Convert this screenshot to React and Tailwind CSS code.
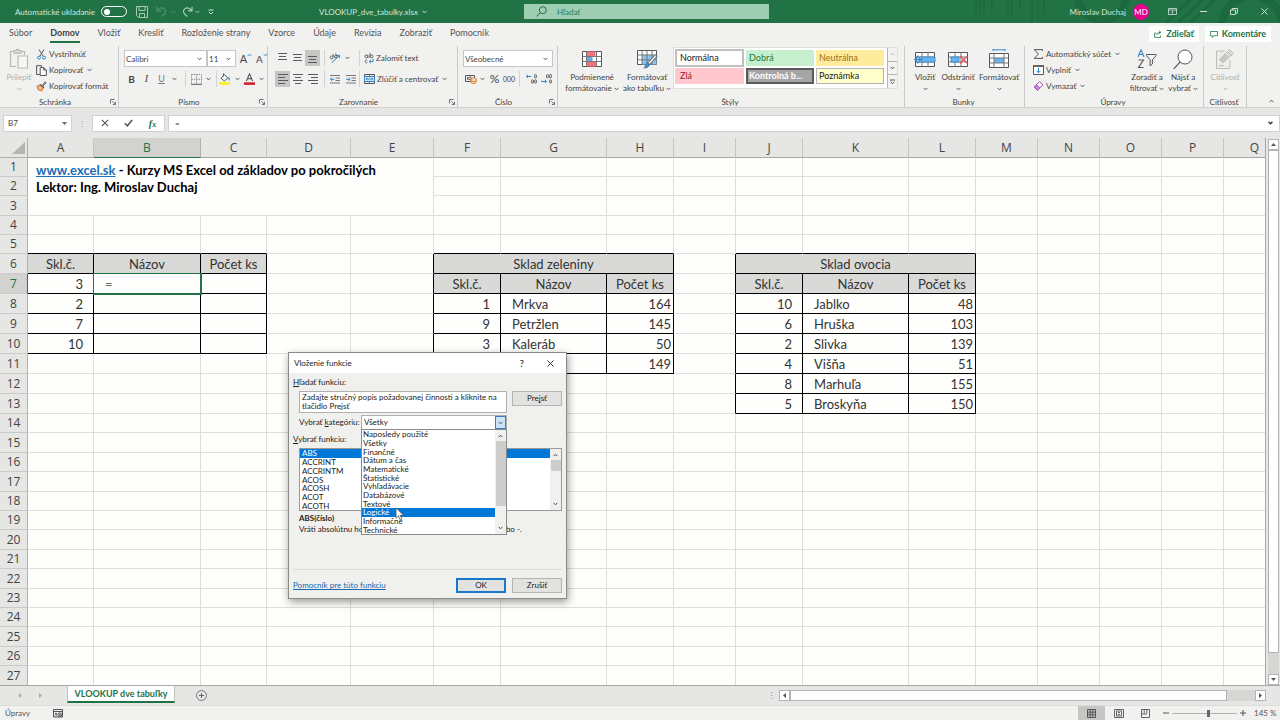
import React, { useState } from 'react';

const columns = [
  ['A', 66], ['B', 107], ['C', 66], ['D', 84], ['E', 83], ['F', 67], ['G', 106], ['H', 67], ['I', 62],
  ['J', 67], ['K', 106], ['L', 67], ['M', 62], ['N', 62], ['O', 62], ['P', 62], ['Q', 62],
];

const rowHeights = [
  19, 19, 20, 19, 19, 20, 20, 20, 20, 20, 20, 20, 20, 19, 20, 19, 20, 19, 19, 20, 19, 20, 19, 19, 20, 19, 20,
];

const cells = {
  A6: 'Skl.č.', B6: 'Názov', C6: 'Počet ks',
  A7: 3, B7: '=', A8: 2, A9: 7, A10: 10,
  F6: 'Sklad zeleniny', F7: 'Skl.č.', G7: 'Názov', H7: 'Počet ks',
  F8: 1, G8: 'Mrkva', H8: 164,
  F9: 9, G9: 'Petržlen', H9: 145,
  F10: 3, G10: 'Kaleráb', H10: 50,
  H11: 149,
  J6: 'Sklad ovocia', J7: 'Skl.č.', K7: 'Názov', L7: 'Počet ks',
  J8: 10, K8: 'Jablko', L8: 48,
  J9: 6, K9: 'Hruška', L9: 103,
  J10: 2, K10: 'Slivka', L10: 139,
  J11: 4, K11: 'Višňa', L11: 51,
  J12: 8, K12: 'Marhuľa', L12: 155,
  J13: 5, K13: 'Broskyňa', L13: 150,
};

// bordered blocks: first/last column, first/last row, number of shaded rows
const blocks = [
  { from: 'A', to: 'C', top: 6, bottom: 10, head: 1 },
  { from: 'F', to: 'H', top: 6, bottom: 11, head: 2 },
  { from: 'J', to: 'L', top: 6, bottom: 13, head: 2 },
];

const tabs = ['Súbor', 'Domov', 'Vložiť', 'Kresliť', 'Rozloženie strany', 'Vzorce', 'Údaje', 'Revízia', 'Zobraziť', 'Pomocník'];

const categories = [
  'Naposledy použité', 'Všetky', 'Finančné', 'Dátum a čas', 'Matematické', 'Štatistické',
  'Vyhľadávacie', 'Databázové', 'Textové', 'Logické', 'Informačné', 'Technické',
];

const functions = ['ABS', 'ACCRINT', 'ACCRINTM', 'ACOS', 'ACOSH', 'ACOT', 'ACOTH'];

/* ---------- icons ---------- */

const Svg = ({ w, h, className = '', children }) => (
  <svg width={w} height={h} viewBox={`0 0 ${w} ${h}`} fill="none" stroke="#555" className={`shrink-0 ${className}`} aria-hidden="true">
    {children}
  </svg>
);

const Chevron = ({ className = 'stroke-[#555]' }) => (
  <svg width="5" height="4" viewBox="0 0 5 4" fill="none" className={`shrink-0 ${className}`} aria-hidden="true">
    <path d="M.6.9 2.5 2.8 4.4.9" />
  </svg>
);

const Launcher = () => (
  <Svg w={6} h={6}>
    <path d="M.5 4.5v-4h4M2.3 2.3l3 3M5.5 2.8v2.7H2.8" strokeWidth=".8" />
  </Svg>
);

const PasteIcon = () => (
  <Svg w={20} h={22}>
    <g stroke="#b9b9b7" strokeWidth="1.2">
      <path d="M7 18.5H1.5v-15H5M12 3.5h3.5V7" />
      <path d="M5 2.5h2a1.6 1.6 0 0 1 3 0h2v2.6H5z" fill="#dcdcda" />
      <path d="M9 8h9.5v12H9z" fill="#f6f6f4" />
    </g>
  </Svg>
);

const ScissorsIcon = () => (
  <Svg w={11} h={11}>
    <path d="M3 .5 7 7M8 .5 4 7" />
    <circle cx="3" cy="8.6" r="1.5" stroke="#2e86c8" />
    <circle cx="8" cy="8.6" r="1.5" stroke="#2e86c8" />
  </Svg>
);

const CopyIcon = () => (
  <Svg w={11} h={11}>
    <path d="M4 9.5H.6V.6h4.8V2" />
    <path d="M4.2 2.6h3.6L10.3 5v5.5H4.2z" fill="#fff" />
    <path d="M7.6 2.6V5h2.7" />
  </Svg>
);

const BrushIcon = () => (
  <Svg w={11} h={11}>
    <path d="M6.5 4.2 9.2.8l1 1-3.2 3" />
    <path d="M1 5.2 4.6 3.6 7.6 6.4 5.8 10 2 8.6z" fill="#f4b183" stroke="#d9762b" />
    <path d="M4.2 3.4 8 6.8" strokeWidth="1.4" />
  </Svg>
);

const AlignIcon = ({ lines }) => (
  <Svg w={10} h={10}>
    {lines.map(([x1, x2, y]) => (
      <path key={y} d={`M${x1} ${y}H${x2}`} stroke="#5a5a5a" />
    ))}
  </Svg>
);

const IndentIcon = ({ right }) => (
  <Svg w={11} h={9}>
    <path d="M0 .5h10M5.5 3h4.5M5.5 5.5h4.5M0 8h10" stroke="#6a6a6a" strokeWidth=".9" />
    <path d={right ? 'M0 4.3h4M2.4 2.6 4.2 4.3 2.4 6' : 'M.4 4.3h4M2.2 2.6.4 4.3 2.2 6'} stroke="#2e86c8" />
  </Svg>
);

const OrientationIcon = () => (
  <Svg w={12} h={12}>
    <circle cx="2.8" cy="5.4" r="1.5" strokeWidth=".9" />
    <path d="M3.6 2.2 6.2 5.6M6.2 1.2 8.4 4" strokeWidth=".9" />
    <circle cx="6.8" cy="4.6" r="1.2" strokeWidth=".9" />
    <path d="M2.6 10.8 10.6 3.4M7.8 3.4h2.8v2.8" stroke="#2e86c8" />
  </Svg>
);

const WrapIcon = () => (
  <Svg w={10} h={11}>
    <circle cx="2.3" cy="3.4" r="1.4" strokeWidth=".9" />
    <path d="M3.9 1.8v3.2M6 0v5" strokeWidth=".9" />
    <circle cx="7.6" cy="3.4" r="1.4" strokeWidth=".9" />
    <path d="M3.4 7.3a1.4 1.4 0 1 0 0 2.2" strokeWidth=".9" />
    <path d="M9 6v2.6H5.4M6.8 7 5.2 8.6l1.6 1.6" stroke="#2e86c8" />
  </Svg>
);

const MergeIcon = () => (
  <Svg w={11} h={10}>
    <path d="M.5.5h10v9H.5z" />
    <path d="M.5 2.5h10v5H.5z" fill="#d3e8f8" stroke="#2e86c8" />
    <path d="M5.5.5v2M5.5 7.5v2M2 5h7M3.4 3.8 2.2 5l1.2 1.2M7.6 3.8 8.8 5 7.6 6.2" stroke="#2b6fa8" strokeWidth=".8" />
  </Svg>
);

const BordersIcon = () => (
  <Svg w={11} h={11}>
    <path d="M.5.5h10v9.5M.5.5v9.5M5.5.5v9.5M.5 5.3h10" strokeDasharray="1.4 1" stroke="#888" />
    <path d="M0 10.3h11" />
  </Svg>
);

const FillIcon = () => (
  <Svg w={12} h={12}>
    <path d="M2 5.2 5.4 1.6 8.8 5 5.4 8z" fill="#fff" />
    <path d="M4.6.4v3.2" />
    <path d="M9.4 4.4q1.6 1.8.6 3" stroke="#2e86c8" strokeWidth="1.3" />
    <path d="M0 10.5h11" stroke="#fbf12a" strokeWidth="3" />
  </Svg>
);

const FontColorIcon = () => (
  <Svg w={11} h={12}>
    <path d="M2.4 8 5.5.8 8.6 8M3.4 5.6h4.2" strokeWidth="1.1" />
    <path d="M0 10.6h11" stroke="#d3222a" strokeWidth="2.6" />
  </Svg>
);

const CurrencyIcon = () => (
  <Svg w={12} h={10}>
    <path d="M.5 1.5h9v6h-9zM2.6 3.2v2.6" />
    <circle cx="5" cy="4.4" r="1.4" />
    <ellipse cx="8.6" cy="5" rx="2.6" ry="1.2" fill="#f8d7b4" stroke="#d9762b" strokeWidth=".9" />
    <path d="M6 5v3.4c0 1.4 5.2 1.4 5.2 0V5" fill="#f8d7b4" stroke="#d9762b" strokeWidth=".9" />
    <path d="M6 6.8c.6 1 4.6 1 5.2 0" stroke="#d9762b" strokeWidth=".8" />
  </Svg>
);

const DecimalIcon = ({ add }) => (
  <Svg w={11} h={10}>
    <g strokeWidth=".9">
      {!add && <rect x="5.6" y=".5" width="1.8" height="3.4" rx=".9" />}
      <rect x="8.6" y=".5" width="1.8" height="3.4" rx=".9" />
      {add && <rect x="5.6" y="5.8" width="1.8" height="3.4" rx=".9" />}
      <rect x="8.6" y="5.8" width="1.8" height="3.4" rx=".9" />
    </g>
    <path d={add ? 'M.4 2.4h5M2 .8.4 2.4 2 4' : 'M0 7.4h5.5M3.900 5.800l1.600 1.600L3.900 9'} stroke="#2e86c8" />
  </Svg>
);

const CondFormatIcon = () => (
  <Svg w={20} h={17}>
    <path d="M.5.5h19v15H.5z" fill="#fff" />
    <path d="M4.5.5h9v5h-9zM4.5 10.5h10v5h-10z" fill="#f4737c" stroke="none" />
    <path d="M4.5 5.5h6v5h-6z" fill="#6cabe0" stroke="none" />
    <path d="M.5 5.5h19M.5 10.5h19M4.5.5v15M14.5.5v15" stroke="#777" />
  </Svg>
);

const TableFormatIcon = () => (
  <Svg w={21} h={19}>
    <path d="M.5.5h19v14H.5z" fill="#fff" />
    <path d="M5 5h14.5v9.5H5z" fill="#8dc1ee" stroke="none" />
    <path d="M.5 5h19M.5 9.8h19M5 .5v14M10 .5v14M15 .5v14" stroke="#777" />
    <path d="m18.8 4.6 1.4 1.4-7.6 8.4-1.8-1.6z" fill="#fff" />
    <path d="M10.6 13q2.2.6 1.8 2.4-2 3-5.6 2.6 2-1 1.6-3.2.8-1.8 2.2-1.8z" fill="#3d8fd1" stroke="#2b6fa8" strokeWidth=".8" />
  </Svg>
);

const CellsIcon = ({ kind }) => (
  <Svg w={22} h={20}>
    {kind === 'format' ? (
      <>
        <path d="M5 .8h12M5 0v2M17 0v2" stroke="#2e86c8" />
        <path d="M1.5 4.5h19v14h-19z" fill="#fff" />
        <path d="M6 9h10v5H6z" fill="#6cb2ee" stroke="none" />
        <path d="M1.5 9h19M1.5 14h19M6 4.5v14M16 4.5v14" stroke="#777" />
      </>
    ) : (
      <>
        <path d="M1.5 3.5h19v14h-19z" fill="#fff" />
        <path d="M1.5 8h19M1.5 13h19M8 3.5v14M14 3.5v14" stroke="#777" />
        {kind === 'insert' ? (
          <>
            <path d="M5 8h16v5H5z" fill="#6cb2ee" stroke="#3a8fd8" />
            <path d="M.8 10.5h8M4.4 6.8.8 10.5l3.6 3.7" stroke="#2e86c8" strokeWidth="1.3" />
          </>
        ) : (
          <>
            <path d="M4 8h8v5H4z" fill="#6cb2ee" stroke="#3a8fd8" />
            <path d="m13 7 7.5 7.5M20.5 7 13 14.5" stroke="#e0505a" strokeWidth="1.3" />
          </>
        )}
      </>
    )}
  </Svg>
);

const SumIcon = () => (
  <Svg w={11} h={10}>
    <path d="M9.5 2V.6H1.2L5.4 5 1.2 9.4h8.3V8" />
  </Svg>
);

const FillDownIcon = () => (
  <Svg w={11} h={10}>
    <path d="M.5 1h10v8.5H.5z" fill="#fff" />
    <path d="M0 1h11" strokeWidth="1.6" />
    <path d="M5.5 2.8v5M3.5 5.8l2 2 2-2" stroke="#2e86c8" />
  </Svg>
);

const EraserIcon = () => (
  <Svg w={11} h={10}>
    <path d="M6.5.6 10 3.8 4.5 9.2 1 6z" fill="#fff" stroke="#9c4fb5" />
    <path d="M3.2 3.8 6.8 7 4.5 9.2 1 6z" fill="#c98bdb" stroke="#9c4fb5" />
  </Svg>
);

const SortIcon = () => (
  <Svg w={20} h={20}>
    <path d="M1 8 4 .8 7 8M2 5.5h4" stroke="#2e86c8" strokeWidth="1.1" />
    <path d="M1.5 11h5l-5 7.5h5" strokeWidth="1.1" />
    <path d="M9.5 5.5H19v1.2l-3.600 4V15l-2.300 1.800v-6.100l-3.600-4z" fill="#f6f6f4" />
  </Svg>
);

const FindIcon = () => (
  <Svg w={20} h={21}>
    <circle cx="12" cy="8" r="7" fill="#fff" />
    <path d="M7 13.2.8 19.8" strokeWidth="1.2" />
  </Svg>
);

const SensitivityIcon = () => (
  <Svg w={20} h={22}>
    <g stroke="#bdbdbb">
      <path d="M15 12v8.5H1.5V3H10" fill="#ececea" />
      <path d="m4.500 11.500 6-6 3.500 3.500-6 6z" fill="#c8c8c6" />
      <path d="m10.500 5.500 4-4 4 4-4.500 3.500M12.500 3.500l4 4" fill="#dededc" />
      <path d="M4 17.500h5" />
    </g>
  </Svg>
);

/* ---------- small controls ---------- */

const Combo = ({ label, value, className }) => (
  <label className={`flex h-[17px] items-center border border-[#c8c6c4] bg-white pr-1 ${className}`}>
    <span className="sr-only">{label}</span>
    <select defaultValue={value} className="h-full min-w-0 flex-1 appearance-none bg-transparent px-px text-[8px] leading-normal text-[#444] outline-none">
      <option>{value}</option>
    </select>
    <Chevron />
  </label>
);

const Divider = () => <span className="h-4 w-px shrink-0 bg-[#d4d2d0]" />;

const IconButton = ({ label, active, children, className = 'w-[15px]' }) => (
  <button aria-label={label} className={`flex h-4 shrink-0 items-center justify-center ${active ? 'bg-[#c6c6c4]' : ''} ${className}`}>
    {children}
  </button>
);

const TextButton = ({ icon, children, menu, className = '' }) => (
  <button className={`flex h-4 items-center gap-0.5 whitespace-nowrap ${className}`}>
    {icon}
    <span>{children}</span>
    {menu && <Chevron className="ml-0.5 stroke-[#555]" />}
  </button>
);

const BigButton = ({ icon, lines, disabled, className = '' }) => (
  <button className={`flex flex-col items-center whitespace-nowrap ${disabled ? 'text-[#b0b0ae]' : ''} ${className}`}>
    <span className="flex h-[22px] items-center">{icon}</span>
    <span className="mt-0.5 leading-[11px]">{lines[0]}</span>
    <span className="flex h-[11px] items-center gap-0.5">
      {lines[1] && <span className="leading-[11px]">{lines[1]}</span>}
      <Chevron className={disabled ? 'stroke-[#b0b0ae]' : 'stroke-[#555]'} />
    </span>
  </button>
);

const Group = ({ title, launcher, className, children }) => (
  <section className={`flex flex-col border-r border-[#c8c8c6] ${className}`} aria-label={title}>
    <div className="flex h-[50px] items-start">{children}</div>
    <div className="flex h-[11px] items-center pr-0.5">
      <span className="flex-1 text-center">{title}</span>
      {launcher && <Launcher />}
    </div>
  </section>
);

/* ---------- title bar and ribbon ---------- */

const TitleBar = () => (
  <header className="relative flex h-[23px] shrink-0 items-center overflow-hidden whitespace-nowrap bg-[#217346] text-[8px] text-[#d3e5da]">
    <svg width="320" height="23" viewBox="0 0 320 23" fill="none" className="absolute right-0 top-0" aria-hidden="true">
      <path d="M16 0v16M20 0v14M24 0v17M32 0v11M48 0v20M52 0v17M60 0v8M72 0v23M78 0v20M84 0v14" stroke="#1e6b40" strokeWidth="2" />
      <circle cx="142" cy="-4" r="24" stroke="#1d693f" strokeWidth="8" />
      <path d="m206 23 24-23M218 23l24-23M230 23l24-23" stroke="#1d693f" strokeWidth="3" />
      <circle cx="292" cy="26" r="30" stroke="#1d693f" strokeWidth="8" />
    </svg>
    <div className="flex w-[319px] shrink-0 items-center pl-[15px]">
      <label className="flex w-[112px] items-center justify-between">
        Automatické ukladanie
        <input type="checkbox" role="switch" className="peer sr-only" />
        <span className="flex h-[11px] w-[26px] items-center rounded-full border border-white px-0.5">
          <span className="size-[6px] rounded-full bg-white" />
        </span>
      </label>
      <button aria-label="Uložiť" className="ml-[9px]">
        <Svg w={12} h={12}>
          <path d="M.5.5h11v11h-9l-2-2zM3 .5v4h6v-4M3.5 11.5v-4h5v4" stroke="#a9cbb8" />
        </Svg>
      </button>
      <button aria-label="Späť" className="ml-2 flex items-center gap-1">
        <Svg w={11} h={11}>
          <path d="M1 .8v4h4M1.2 4.6Q4 1 7.5 2.2 11 4.5 8.5 8l-3 2.5" stroke="#4f9270" strokeWidth="1.2" />
        </Svg>
        <Chevron className="stroke-[#4f9270]" />
      </button>
      <button aria-label="Znova" className="ml-1.5 flex items-center gap-0.5">
        <Svg w={11} h={11}>
          <path d="M10 .8v4H6M9.8 4.6Q7 1 3.5 2.2 0 4.5 2.5 8l3 2.5" stroke="#a9cbb8" strokeWidth="1.2" />
        </Svg>
        <Chevron className="stroke-[#a9cbb8]" />
      </button>
      <button aria-label="Prispôsobiť panel" className="ml-2">
        <Svg w={6} h={6}>
          <path d="M.5 1h5M1 3l2 2 2-2" stroke="#d3e5da" />
        </Svg>
      </button>
    </div>
    <button className="flex w-[205px] items-center gap-1">
      VLOOKUP_dve_tabulky.xlsx
      <Chevron className="stroke-[#d3e5da]" />
    </button>
    <label className="flex h-[15px] w-[245px] items-center gap-2.5 bg-[#9fcdb1] pl-3">
      <Svg w={11} h={11}>
        <circle cx="6.8" cy="4.2" r="3.5" stroke="#217346" />
        <path d="M4.3 6.7.6 10.4" stroke="#217346" />
      </Svg>
      <input aria-label="Hľadať" placeholder="Hľadať" className="w-40 bg-transparent outline-none placeholder:text-[#2f7d52]" />
    </label>
    <div className="relative ml-auto flex items-center">
      <span>Miroslav Duchaj</span>
      <span className="ml-[7px] flex size-4 items-center justify-center rounded-full bg-[#e3008c] text-white">MD</span>
      <button aria-label="Možnosti zobrazenia pása s nástrojmi" className="ml-[19px]">
        <Svg w={9} h={7}>
          <path d="M.5.5h8v6h-8zM.5 2h8M4.5 5.5v-2M3.5 4.3l1-1 1 1" stroke="#d3e5da" strokeWidth=".8" />
        </Svg>
      </button>
      <button aria-label="Minimalizovať" className="ml-[23px]">
        <Svg w={7} h={7}><path d="M0 3.5h7" stroke="#d3e5da" /></Svg>
      </button>
      <button aria-label="Obnoviť" className="ml-[23px]">
        <Svg w={8} h={7}><path d="M.5 2h5v4.5h-5zM2.2 2V.5h5.3V5h-2" stroke="#d3e5da" strokeWidth=".9" /></Svg>
      </button>
      <button aria-label="Zavrieť" className="ml-[23px] mr-3">
        <Svg w={7} h={7}><path d="m.5.5 6 6M6.5.5l-6 6" stroke="#d3e5da" /></Svg>
      </button>
    </div>
  </header>
);

const TabBar = () => (
  <nav className="flex h-[22px] shrink-0 items-center justify-between pl-[9px] pr-[9px] text-[#555]">
    <div className="flex gap-[18px] text-[9px]">
      {tabs.map((tab) => (
        <a
          key={tab}
          href="#"
          className={`flex h-[17px] items-center border-b-2 ${tab === 'Domov' ? 'border-[#217346] font-bold text-[#444]' : 'border-transparent'}`}
        >
          {tab}
        </a>
      ))}
    </div>
    <div className="flex gap-1.5 text-[9px] font-bold text-[#217346]">
      <button className="flex h-4 w-[50px] items-center justify-center gap-1 bg-white">
        <Svg w={8} h={8}>
          <path d="M2 3H.6v4.4h6V5.5M2.6 5Q2.6 2.4 6 2.4M4.8.6l2.2 1.8-2.2 1.8" stroke="#217346" strokeWidth=".8" />
        </Svg>
        Zdieľať
      </button>
      <button className="flex h-4 w-[66px] items-center justify-center gap-1 bg-white">
        <Svg w={8} h={7}><path d="M.5.5h7v4.2H4L2.2 6.4V4.7H.5z" stroke="#217346" strokeWidth=".8" /></Svg>
        Komentáre
      </button>
    </div>
  </nav>
);

const Ribbon = () => (
  <div className="flex h-[63px] shrink-0 overflow-hidden border-b border-[#d0d0ce] pt-px text-[8px] leading-3 text-[#444]">
    <Group title="Schránka" launcher className="w-[119px] shrink-0">
      <BigButton disabled className="ml-1.5 mt-0.5 w-[26px]" icon={<PasteIcon />} lines={['Prilepiť']} />
      <div className="ml-1 flex flex-col">
        <TextButton icon={<ScissorsIcon />}>Vystrihnúť</TextButton>
        <TextButton icon={<CopyIcon />} menu>Kopírovať</TextButton>
        <TextButton icon={<BrushIcon />}>Kopírovať formát</TextButton>
      </div>
    </Group>

    <Group title="Písmo" launcher className="w-[149px] shrink-0">
      <div className="flex flex-col gap-1 pl-[5px] pt-1">
        <div className="flex items-center">
          <Combo label="Písmo" value="Calibri" className="w-[83px]" />
          <Combo label="Veľkosť písma" value="11" className="w-[29px]" />
          <IconButton label="Zväčšiť písmo" className="ml-0.5 w-4">
            <span className="text-[11px]">A</span>
            <Chevron className="mb-2 rotate-180 stroke-[#2e86c8]" />
          </IconButton>
          <IconButton label="Zmenšiť písmo" className="w-4">
            <span className="text-[10px]">A</span>
            <Chevron className="mb-2 stroke-[#2e86c8]" />
          </IconButton>
        </div>
        <div className="flex items-center">
          <IconButton label="Tučné"><b className="text-[10px]">B</b></IconButton>
          <IconButton label="Kurzíva"><i className="font-['Liberation_Serif',serif] text-[10px]">I</i></IconButton>
          <IconButton label="Podčiarknuté"><u className="text-[9px] text-[#777]">U</u></IconButton>
          <IconButton label="Typy podčiarknutia" className="mr-1.5 w-2.5"><Chevron /></IconButton>
          <Divider />
          <IconButton label="Orámovania" className="ml-0.5 w-4"><BordersIcon /></IconButton>
          <IconButton label="Typy orámovania" className="mr-1 w-2"><Chevron /></IconButton>
          <Divider />
          <IconButton label="Farba výplne" className="w-4"><FillIcon /></IconButton>
          <IconButton label="Farby výplne" className="w-2"><Chevron /></IconButton>
          <IconButton label="Farba písma" className="w-4"><FontColorIcon /></IconButton>
          <IconButton label="Farby písma" className="w-2"><Chevron /></IconButton>
        </div>
      </div>
    </Group>

    <Group title="Zarovnanie" launcher className="w-[190px] shrink-0">
      <div className="flex flex-col gap-[5px] pl-[7px] pt-1">
        <div className="flex items-center">
          <IconButton label="Zarovnať nahor"><AlignIcon lines={[[0, 9, 0.5], [1, 8, 3.5], [0, 9, 6.5]]} /></IconButton>
          <IconButton label="Zarovnať na stred"><AlignIcon lines={[[0, 9, 1.5], [1, 8, 4.5], [0, 9, 7.5]]} /></IconButton>
          <IconButton label="Zarovnať nadol" active><AlignIcon lines={[[0, 9, 3.5], [1, 8, 6.5], [0, 9, 9.5]]} /></IconButton>
          <span className="w-1" />
          <Divider />
          <IconButton label="Orientácia" className="ml-0.5 w-4"><OrientationIcon /></IconButton>
          <IconButton label="Typy orientácie" className="mr-2 w-2"><Chevron /></IconButton>
          <Divider />
          <TextButton className="ml-1" icon={<WrapIcon />}>Zalomiť text</TextButton>
        </div>
        <div className="flex items-center">
          <IconButton label="Zarovnať vľavo" active><AlignIcon lines={[[0, 10, 0.5], [0, 7, 3.5], [0, 10, 6.5], [0, 7, 9.5]]} /></IconButton>
          <IconButton label="Centrovať"><AlignIcon lines={[[0, 10, 0.5], [2, 8, 3.5], [0, 10, 6.5], [2, 8, 9.5]]} /></IconButton>
          <IconButton label="Zarovnať vpravo"><AlignIcon lines={[[0, 10, 0.5], [3, 10, 3.5], [0, 10, 6.5], [3, 10, 9.5]]} /></IconButton>
          <span className="w-1" />
          <Divider />
          <IconButton label="Zmenšiť zarážku" className="ml-0.5 w-4"><IndentIcon /></IconButton>
          <IconButton label="Zväčšiť zarážku" className="w-4"><IndentIcon right /></IconButton>
          <Divider />
          <TextButton className="ml-1" icon={<MergeIcon />} menu>Zlúčiť a centrovať</TextButton>
        </div>
      </div>
    </Group>

    <Group title="Číslo" launcher className="w-[100px] shrink-0">
      <div className="flex flex-col gap-1 pl-[5px] pt-1">
        <Combo label="Formát čísla" value="Všeobecné" className="w-[90px]" />
        <div className="flex items-center">
          <IconButton label="Účtovnícky formát"><CurrencyIcon /></IconButton>
          <IconButton label="Meny" className="w-2"><Chevron /></IconButton>
          <IconButton label="Percentá" className="w-[17px]"><span className="text-[12px]">%</span></IconButton>
          <IconButton label="Oddeľovač tisícov" className="mr-1 w-3"><span className="text-[7px]">000</span></IconButton>
          <Divider />
          <IconButton label="Pridať desatinné miesto" className="ml-1 w-[15px]"><DecimalIcon add /></IconButton>
          <IconButton label="Odstrániť desatinné miesto"><DecimalIcon /></IconButton>
        </div>
      </div>
    </Group>

    <Group title="Štýly" className="min-w-0 flex-1">
      <BigButton className="ml-1.5 mt-0.5 w-14" icon={<CondFormatIcon />} lines={['Podmienené', 'formátovanie']} />
      <BigButton className="ml-0.5 mt-0.5 w-[50px]" icon={<TableFormatIcon />} lines={['Formátovať', 'ako tabuľku']} />
      <div className="ml-px mt-px flex h-[42px] border border-[#e0e0de] bg-white">
        <div className="grid auto-rows-min grid-cols-[69px_68px_68px] gap-x-[2px] gap-y-px p-px pr-[3px] text-left text-[9px]">
          <button className="h-[18px] border-2 border-[#c0c0be] bg-white pl-[3px] text-left text-[#222]">Normálna</button>
          <button className="my-px bg-[#c6efce] pl-[3px] text-left text-[#1f7a32]">Dobrá</button>
          <button className="my-px bg-[#ffeb9c] pl-[3px] text-left text-[#a0700e]">Neutrálna</button>
          <button className="h-4 bg-[#ffc7ce] pl-[5px] text-left text-[#a01828]">Zlá</button>
          <button className="h-4 border-2 border-[#5a5a5a] bg-[#a5a5a5] pl-px text-left font-bold text-white">Kontrolná b...</button>
          <button className="h-4 border border-[#b2b2b2] bg-[#ffffcc] pl-0.5 text-left text-[#222]">Poznámka</button>
        </div>
        <div className="flex w-[10px] flex-col divide-y divide-[#b4b4b2] border-l border-[#b4b4b2] bg-[#f3f3f1]">
          <button aria-label="Predchádzajúce štýly" className="flex flex-1 items-center justify-center"><Chevron className="rotate-180 stroke-[#b4b4b2]" /></button>
          <button aria-label="Ďalšie štýly" className="flex flex-1 items-center justify-center"><Chevron /></button>
          <button aria-label="Všetky štýly" className="flex flex-1 items-center justify-center">
            <Svg w={5} h={6}><path d="M0 1h5M.6 2.8l1.9 1.9 1.9-1.9" /></Svg>
          </button>
        </div>
      </div>
    </Group>

    <Group title="Bunky" className="w-[120px] shrink-0">
      <BigButton className="ml-2 mt-0.5 w-6" icon={<CellsIcon kind="insert" />} lines={['Vložiť']} />
      <BigButton className="ml-0.5 mt-0.5 w-[38px]" icon={<CellsIcon kind="delete" />} lines={['Odstrániť']} />
      <BigButton className="ml-px mt-0.5 w-[42px]" icon={<CellsIcon kind="format" />} lines={['Formátovať']} />
    </Group>

    <Group title="Úpravy" className="w-[179px] shrink-0">
      <div className="ml-2 flex w-[92px] flex-col">
        <TextButton icon={<SumIcon />} menu>Automatický súčet</TextButton>
        <TextButton icon={<FillDownIcon />} menu>Vyplniť</TextButton>
        <TextButton icon={<EraserIcon />} menu>Vymazať</TextButton>
      </div>
      <BigButton className="ml-1 mt-0.5 w-9" icon={<SortIcon />} lines={['Zoradiť a', 'filtrovať']} />
      <BigButton className="ml-0.5 mt-0.5 w-8" icon={<FindIcon />} lines={['Nájsť a', 'vybrať']} />
    </Group>

    <Group title="Citlivosť" className="w-[43px] shrink-0">
      <BigButton disabled className="mt-0.5 w-full" icon={<SensitivityIcon />} lines={['Citlivosť']} />
    </Group>

    <div className="flex w-[33px] shrink-0 items-end justify-end pb-1 pr-1.5">
      <button aria-label="Zbaliť pás s nástrojmi"><Chevron className="rotate-180 stroke-[#555]" /></button>
    </div>
  </div>
);

const FormulaBar = () => (
  <div className="flex h-[30px] shrink-0 items-center bg-[#e6e6e4] pl-[3px] text-[8px] text-[#444]">
    <label className="flex h-[17px] w-[69px] items-center border border-[#d0d0ce] bg-white pl-1 pr-1">
      <span className="sr-only">Pole názvov</span>
      <input defaultValue="B7" className="min-w-0 flex-1 bg-transparent outline-none" />
      <svg width="5" height="3" viewBox="0 0 5 3" fill="#666" aria-hidden="true"><path d="M0 0h5L2.5 3z" /></svg>
    </label>
    <span className="w-5 text-center text-[#999]">⋮</span>
    <div className="flex h-[17px] w-[73px] items-center justify-around border border-[#d0d0ce] bg-white">
      <button aria-label="Zrušiť zápis"><Svg w={8} h={8}><path d="m.8.8 6.4 6.4M7.2.8.8 7.2" strokeWidth="1.1" /></Svg></button>
      <button aria-label="Zadať"><Svg w={9} h={8}><path d="m.8 4.2 2.6 2.6L8.2 1" strokeWidth="1.5" /></Svg></button>
      <button aria-label="Vložiť funkciu" className="font-['Liberation_Serif',serif] text-[10px] font-bold italic text-[#217346]">f<span className="text-[8px]">x</span></button>
    </div>
    <label className="ml-[3px] flex h-[17px] flex-1 items-center border border-[#d0d0ce] bg-white pl-1.5 pr-1.5">
      <span className="sr-only">Vzorec</span>
      <input defaultValue="=" className="flex-1 bg-transparent outline-none" />
      <Chevron className="stroke-[#444] stroke-[1.5]" />
    </label>
  </div>
);

/* ---------- sheet ---------- */

const findBlock = (col, row) => blocks.find((b) => col >= b.from && col <= b.to && row >= b.top && row <= b.bottom);

const cellClass = (col, row) => {
  const block = findBlock(col, row);
  const value = cells[col + row];
  const classes = ['border-r border-b overflow-hidden whitespace-nowrap p-0'];
  // the neighbour to the left of or above a block carries the block's outer line
  const next = columns[columns.findIndex(([name]) => name === col) + 1];
  if (col === 'B' && row === 7) return 'border-r border-b border-[#217346] text-left pl-[11px] outline outline-[#217346] text-[#666] relative';
  if (block) {
    classes.push('border-black');
    if (row < block.top + block.head) classes.push('bg-[#d9d9d7] text-center');
    else if (typeof value === 'number') classes.push(col === block.from ? 'text-right pr-2.5' : 'text-right pr-0.5');
    else classes.push('pl-[11px]');
  } else {
    classes.push(next && findBlock(next[0], row) ? 'border-r-black' : 'border-r-[#dededc]');
    classes.push(findBlock(col, row + 1) ? 'border-b-black' : 'border-b-[#dededc]');
  }
  return classes.join(' ');
};

const Sheet = () => (
  <div className="min-w-0 flex-1 overflow-hidden border-r border-[#a8a8a6] bg-[#fefefc]">
    <table className="w-full table-fixed border-separate border-spacing-0 font-[Lato,sans-serif] text-[13px] leading-4 text-[#333]">
      <colgroup>
        <col style={{ width: 28 }} />
        {columns.map(([name, width]) => (
          <col key={name} style={{ width }} />
        ))}
      </colgroup>
      <thead>
        <tr className="h-5 bg-[#e6e6e4] font-['Open_Sans',sans-serif] text-[12px] text-[#444]">
          <th className="border-b border-r border-[#b0b0ae] p-0">
            <svg width="13" height="12" viewBox="0 0 13 12" fill="#b4b4b2" className="ml-auto mr-0.5" aria-hidden="true"><path d="M13 0v12H0z" /></svg>
          </th>
          {columns.map(([name]) => (
            <th
              key={name}
              className={`border-b border-r p-0 font-normal ${name === 'B' ? 'border-b-[#217346] border-r-[#b0b0ae] bg-[#d2d2d0] text-[#217346]' : 'border-b-[#a8a8a6] border-r-[#c4c4c2]'}`}
            >
              {name}
            </th>
          ))}
        </tr>
      </thead>
      <tbody>
        {rowHeights.map((height, i) => {
          const row = i + 1;
          return (
            <tr key={row} style={{ height }}>
              <th
                className={`border-b border-r border-b-[#cacac8] p-0 font-['Open_Sans',sans-serif] text-[12px] font-normal ${row === 7 ? 'border-r-[#217346] bg-[#d2d2d0] text-[#217346]' : 'border-r-[#b0b0ae] bg-[#e6e6e4] text-[#444]'}`}
              >
                {row}
              </th>
              {row === 1 && (
                <td colSpan={5} rowSpan={3} className="border-b border-r border-[#dededc] pl-2 pt-1 align-top font-bold leading-[17px] text-black">
                  <a href="#" className="text-[#1a6fb8] underline">www.excel.sk</a> - Kurzy MS Excel od základov po pokročilých
                  <br />
                  Lektor: Ing. Miroslav Duchaj
                </td>
              )}
              {columns.map(([col]) => {
                if (row <= 3 && col <= 'E') return null;
                const merged = row === 6 && (col === 'F' || col === 'J');
                if (row === 6 && ['G', 'H', 'K', 'L'].includes(col)) return null;
                return (
                  <td key={col} colSpan={merged ? 3 : 1} className={cellClass(col, row)}>
                    {cells[col + row]}
                  </td>
                );
              })}
            </tr>
          );
        })}
      </tbody>
    </table>
  </div>
);

const Arrow = ({ className = '' }) => (
  <svg width="5" height="3" viewBox="0 0 5 3" fill="#555" className={className} aria-hidden="true">
    <path d="M0 3h5L2.5 0z" />
  </svg>
);

const VerticalScroll = () => (
  <div className="flex w-[14px] shrink-0 flex-col items-center bg-[#e6e6e4] pt-px">
    <button aria-label="Nahor" className="flex h-[11px] w-[11px] items-center justify-center border border-[#b4b4b2] bg-white"><Arrow /></button>
    <div className="flex w-[11px] flex-1 flex-col bg-[#d6d6d4]">
      <div className="h-[96%] border border-[#b4b4b2] bg-white" />
    </div>
    <button aria-label="Nadol" className="flex h-[11px] w-[11px] items-center justify-center border border-[#b4b4b2] bg-white"><Arrow className="rotate-180" /></button>
  </div>
);

const SheetTabs = () => (
  <div className="flex h-5 shrink-0 items-center border-t border-[#a8a8a6] bg-[#e6e6e4] pr-3.5 text-[9px]">
    <div className="flex w-[67px] items-center gap-4 pl-[17px]">
      <button aria-label="Predchádzajúci hárok"><Arrow className="-rotate-90 opacity-40" /></button>
      <button aria-label="Nasledujúci hárok"><Arrow className="rotate-90 opacity-40" /></button>
    </div>
    <button className="mb-0.5 h-[17px] w-[108px] border-x border-b-2 border-x-[#c0c0be] border-b-[#217346] bg-white font-bold text-[#217346]">VLOOKUP dve tabuľky</button>
    <button aria-label="Nový hárok" className="ml-[21px]">
      <Svg w={11} h={11}><circle cx="5.5" cy="5.5" r="5" stroke="#777" /><path d="M5.5 3v5M3 5.5h5" stroke="#666" /></Svg>
    </button>
    <span className="ml-auto w-3 text-[#888]">⋮</span>
    <div className="flex h-[11px] w-[487px] items-stretch">
      <button aria-label="Doľava" className="flex w-[11px] items-center justify-center border border-[#b4b4b2] bg-white"><Arrow className="-rotate-90" /></button>
      <div className="flex-1 bg-[#d6d6d4]"><div className="h-full w-[94%] border border-[#b4b4b2] bg-white" /></div>
      <button aria-label="Doprava" className="flex w-[11px] items-center justify-center border border-[#b4b4b2] bg-white"><Arrow className="rotate-90" /></button>
    </div>
  </div>
);

const StatusBar = () => (
  <footer className="flex h-[15px] shrink-0 items-center border-t border-[#dcdcda] pl-[5px] pr-[3px] text-[8px] text-[#555]">
    <span className="w-12">Úpravy</span>
    <button aria-label="Záznam makra">
      <Svg w={10} h={9}>
        <path d="M.5.5h9V8h-9zM.5 2.5h9M2 4.5h2M2 6h2" />
        <circle cx="6.8" cy="5.8" r="2" fill="#f1f1ef" />
        <circle cx="6.8" cy="5.8" r=".6" fill="#555" />
      </Svg>
    </button>
    <div className="ml-auto flex h-full items-center">
      <button aria-label="Normálne" className="flex h-full w-[27px] items-center justify-center bg-[#c6c6c4]">
        <Svg w={9} h={9}><path d="M.5.5h8v8h-8zM3.2.5v8M5.8.5v8M.5 3.2h8M.5 5.8h8" /></Svg>
      </button>
      <button aria-label="Rozloženie strany" className="flex w-[27px] justify-center">
        <Svg w={10} h={9}><path d="M.5.5h9v8h-9zM2.5 2h5v5h-5zM4 3.5h2M4 5.5h2" strokeWidth=".9" /></Svg>
      </button>
      <button aria-label="Zlomy strán" className="flex w-[27px] justify-center">
        <Svg w={9} h={9}><path d="M.5.5h8v8h-8zM3.2.5v4M5.8.5v4M.5 5h5.3" strokeWidth=".9" /></Svg>
      </button>
      <button aria-label="Oddialiť" className="ml-1"><Svg w={6} h={6}><path d="M0 3h6" /></Svg></button>
      <input
        type="range"
        aria-label="Lupa"
        min="0"
        max="100"
        defaultValue="57"
        className="mx-[3px] h-[9px] w-[65px] appearance-none bg-[linear-gradient(#b0b0ae,#b0b0ae)] bg-[length:100%_1px] bg-center bg-no-repeat [&::-webkit-slider-thumb]:h-[7px] [&::-webkit-slider-thumb]:w-[3px] [&::-webkit-slider-thumb]:appearance-none [&::-webkit-slider-thumb]:bg-[#666]"
      />
      <button aria-label="Priblížiť"><Svg w={6} h={6}><path d="M0 3h6M3 0v6" /></Svg></button>
      <span className="ml-2 w-[23px] whitespace-nowrap">145 %</span>
    </div>
  </footer>
);

/* ---------- insert function dialog ---------- */

const ScrollTrack = ({ thumb }) => (
  <div className="flex w-[11px] shrink-0 flex-col items-center justify-between bg-[#f0f0ee] pb-1">
    <span className="flex h-[11px] shrink-0 items-center"><Chevron className="rotate-180 stroke-[#444]" /></span>
    <span className={`w-2.5 bg-[#cdcdcb] ${thumb}`} />
    <span className="flex-1" />
    <Chevron className="stroke-[#444]" />
  </div>
);

const InsertFunctionDialog = () => {
  const [category, setCategory] = useState('Všetky');

  return (
    <div role="dialog" aria-label="Vloženie funkcie" className="absolute left-[288px] top-[352px] flex h-[247px] w-[279px] flex-col border border-[#8a8a88] bg-[#f0f0ee] text-[8px] leading-[9px] text-[#222] shadow-[1px_3px_8px_rgba(0,0,0,0.4)]">
      <div className="flex h-5 shrink-0 items-center bg-white pl-[5px]">
        <span>Vloženie funkcie</span>
        <button aria-label="Pomocník" className="ml-auto text-[10px]">?</button>
        <button aria-label="Zavrieť" className="ml-[23px] mr-3">
          <Svg w={7} h={7}><path d="m.5.5 6 6M6.5.5l-6 6" stroke="#333" /></Svg>
        </button>
      </div>

      <div className="flex flex-1 flex-col pl-1 pr-1">
        <label htmlFor="search" className="mt-[5px]"><u>H</u>ľadať funkciu:</label>
        <div className="ml-1.5 mt-1 flex justify-between">
          <textarea
            id="search"
            defaultValue="Zadajte stručný popis požadovanej činnosti a kliknite na tlačidlo Prejsť"
            className="h-[22px] w-[208px] resize-none overflow-hidden border border-[#b0b0ae] bg-white px-0.5 py-px outline-none"
          />
          <button className="h-[15px] w-[50px] border border-[#b4b4b2] bg-[#e2e2e0]">Pre<u>j</u>sť</button>
        </div>

        <div className="ml-1.5 mt-0.5 flex h-[15px] items-center">
          <label htmlFor="category" className="w-[62px] whitespace-nowrap">Vybrať <u>k</u>ategóriu:</label>
          <div className="relative flex h-[15px] w-[146px] border border-[#b0b0ae] bg-white">
            <select
              id="category"
              value={category}
              onChange={(e) => setCategory(e.target.value)}
              className="min-w-0 flex-1 appearance-none bg-transparent pl-0.5 outline-none"
            >
              {categories.map((name) => (
                <option key={name}>{name}</option>
              ))}
            </select>
            <span className="flex w-[11px] items-center justify-center border border-[#3c7fc0] bg-[#cce4f7]"><Chevron /></span>

            <div className="absolute -left-px top-[13px] z-10 flex h-[106px] w-[146px] border border-[#8a8a88] bg-white">
              <ul className="flex flex-1 flex-col leading-[8px]">
                {categories.map((name) => (
                  <li key={name} className={`flex min-h-0 flex-1 items-center pl-px ${name === 'Logické' ? 'bg-[#0078d7] text-white' : ''}`}>
                    {name}
                  </li>
                ))}
              </ul>
              <ScrollTrack thumb="h-[65px]" />
              <svg width="10" height="14" viewBox="0 0 10 14" className="absolute left-[33px] top-[77px]" aria-hidden="true">
                <path d="M1 .8v10.4l2.5-2.3 1.7 4 1.700-.8-1.700-3.800h3.400z" fill="#fff" stroke="#444" strokeWidth=".7" />
              </svg>
            </div>
          </div>
        </div>

        <span className="mt-[5px]"><u>V</u>ybrať funkciu:</span>
        <div className="ml-1.5 mt-1 flex h-[63px] border border-[#9a9a98] bg-white">
          <ul className="flex flex-1 flex-col leading-[8px]">
            {functions.map((name) => (
              <li key={name} className={`flex min-h-0 flex-1 items-center pl-0.5 ${name === 'ABS' ? 'bg-[#0078d7] text-white' : ''}`}>
                {name}
              </li>
            ))}
          </ul>
          <ScrollTrack thumb="h-[11px]" />
        </div>

        <b className="ml-1.5 mt-[3px]">ABS(číslo)</b>
        <p className="ml-1.5 mt-0.5 whitespace-nowrap">Vráti absolútnu hodnotu čísla, t. j. číslo bez znamienka + alebo -.</p>

        <div className="mt-auto flex items-center border-t border-[#dcdcda] pb-[5px] pt-2">
          <a href="#" className="text-[#1a66b0] underline">Pomocník pre túto funkciu</a>
          <button className="ml-auto h-[15px] w-[50px] border-2 border-[#1a78c8] bg-[#e2e2e0]">OK</button>
          <button className="ml-1.5 h-[15px] w-[50px] border border-[#b4b4b2] bg-[#e2e2e0]">Zrušiť</button>
        </div>
      </div>
    </div>
  );
};

const App = () => (
  <div className="relative flex h-screen flex-col overflow-hidden bg-[#f1f1ef] font-[Lato,'Open_Sans',sans-serif]">
    <TitleBar />
    <TabBar />
    <Ribbon />
    <FormulaBar />
    <main className="flex min-h-0 flex-1">
      <Sheet />
      <VerticalScroll />
    </main>
    <SheetTabs />
    <StatusBar />
    <InsertFunctionDialog />
  </div>
);

export default App;
